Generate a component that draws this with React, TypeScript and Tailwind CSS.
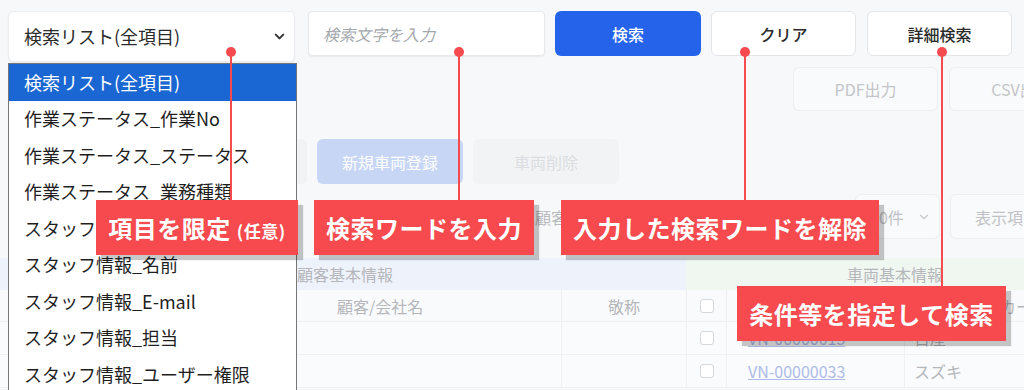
import { ChevronDown } from "lucide-react";

const font = "font-['Noto_Sans_CJK_JP','Noto_Sans',sans-serif]";

const options = [
  "検索リスト(全項目)",
  "作業ステータス_作業No",
  "作業ステータス_ステータス",
  "作業ステータス_業務種類",
  "スタッフ情報_スタッフNo",
  "スタッフ情報_名前",
  "スタッフ情報_E-mail",
  "スタッフ情報_担当",
  "スタッフ情報_ユーザー権限",
  "スタッフ情報_作成日",
];

// 注釈の線と丸
function Pin({ x, bottom }: { x: number; bottom: number }) {
  return (
    <div className="absolute top-[47px] flex flex-col items-center" style={{ left: x - 5 }}>
      <div className="w-[10px] h-[10px] rounded-full bg-[#f64a4e]" />
      <div className="w-[2px] bg-[#f64a4e] -mt-[2px]" style={{ height: bottom - 55 }} />
    </div>
  );
}

function Callout({ children, x, y, w }: { children: React.ReactNode; x: number; y: number; w: number }) {
  return (
    <div
      className="absolute h-[55px] flex items-center justify-center bg-[#f74a4e] text-white font-bold text-[24px] shadow-[5px_5px_1px_rgba(0,0,0,0.22)] tracking-[0.5px] whitespace-nowrap"
      style={{ left: x, top: y, width: w }}
    >
      {children}
    </div>
  );
}

export default function App() {
  return (
    <div className={`relative w-[1024px] h-[390px] overflow-hidden bg-[#f7f8fa] ${font}`}>
      {/* search bar */}
      <div className="flex items-start h-[56px] pt-[11px] pl-[8px]">
        <div className="shrink-0 w-[287px] h-[51px] bg-white rounded-[6px] border border-[#eceef1] shadow-[0_1px_2px_rgba(0,0,0,0.06)] flex items-center justify-between pl-[15px] pr-[7px] text-[18px] text-[#2b2b2b]">
          <span>検索リスト(全項目)</span>
          <ChevronDown size={15} strokeWidth={3.2} className="text-[#333]" />
        </div>
        <div className="ml-[13px] w-[237px] h-[45px] bg-white rounded-[4px] border border-[#e7e9ec] shadow-[0_1px_2px_rgba(0,0,0,0.06)] flex items-center pl-[14px] text-[16px] italic text-[#a5a8ad]">
          検索文字を入力
        </div>
        <button className="ml-[10px] w-[146px] h-[45px] rounded-[6px] bg-[#2563eb] text-white text-[16px] font-medium">
          検索
        </button>
        <button className="ml-[10px] w-[145px] h-[45px] rounded-[6px] bg-white border border-[#e3e5e8] text-[#2b2b2b] text-[16px] font-medium">
          クリア
        </button>
        <button className="ml-[11px] w-[145px] h-[45px] rounded-[6px] bg-white border border-[#e3e5e8] text-[#2b2b2b] text-[16px] font-medium">
          詳細検索
        </button>
      </div>

      {/* export buttons (faded) */}
      <div className="flex pl-[793px] mt-[11px] gap-[11px]">
        <div className="shrink-0 w-[145px] h-[44px] rounded-[6px] border border-[#eeeff1] bg-[#f9fafb] flex items-center justify-center text-[16px] text-[#c3c5c9]">
          PDF出力
        </div>
        <div className="shrink-0 w-[145px] h-[44px] rounded-[6px] border border-[#eeeff1] bg-[#f9fafb] flex items-center justify-center text-[16px] text-[#c3c5c9] whitespace-nowrap">
          CSV出力
        </div>
      </div>

      {/* action buttons */}
      <div className="flex pl-[162px] mt-[28px] gap-[10px]">
        <div className="w-[145px] h-[45px] rounded-[6px] bg-[#f1f2f4]" />
        <div className="w-[146px] h-[45px] rounded-[6px] bg-[#c8d6f6] flex items-center justify-center text-[16px] text-white">
          新規車両登録
        </div>
        <div className="w-[146px] h-[45px] rounded-[6px] bg-[#f2f3f5] flex items-center justify-center text-[16px] text-[#dcdde0]">
          車両削除
        </div>
      </div>

      {/* list controls */}
      <div className="flex items-center mt-[10px] h-[45px] pl-[535px]">
        <span className="shrink-0 w-[320px] text-[16px] text-[#b9bbbf] whitespace-nowrap">顧客数 100件</span>
        <div className="shrink-0 w-[85px] h-[45px] rounded-[6px] border border-[#eeeff1] bg-[#f9fafb] flex items-center justify-between pl-[14px] pr-[8px] text-[16px] text-[#c0c2c6]">
          <span>20件</span>
          <ChevronDown size={14} strokeWidth={2} className="text-[#c6c8cc]" />
        </div>
        <div className="ml-[10px] w-[120px] shrink-0 h-[45px] rounded-l-[6px] border border-[#eeeff1] bg-[#f9fafb] flex items-center pl-[24px] text-[16px] text-[#c0c2c6] whitespace-nowrap">
          表示項目
        </div>
      </div>

      {/* table */}
      <div className="mt-[19px] text-[16px] text-[#b5b7bb] whitespace-nowrap">
        <div className="flex h-[32px]">
          <div className="w-[686px] bg-[#eef2fb] flex items-center pl-[297px]">顧客基本情報</div>
          <div className="flex-1 bg-[#f0f7f1] flex items-center pl-[161px]">車両基本情報</div>
        </div>
        <div className="flex h-[32px] bg-[#f9fafb] border-b border-[#eff0f2]">
          <div className="shrink-0 w-[561px] flex items-center pl-[337px]">顧客/会社名</div>
          <div className="shrink-0 w-[125px] border-l border-[#eff0f2] flex items-center justify-center">敬称</div>
          <div className="shrink-0 w-[40px] border-l border-[#eff0f2] flex items-center justify-center">
            <div className="w-[14px] h-[14px] rounded-[3px] border border-[#d5d7db] bg-white" />
          </div>
          <div className="shrink-0 w-[178px] border-l border-[#eff0f2]" />
          <div className="shrink-0 w-[200px] border-l border-[#eff0f2] flex items-center pl-[95px]">カーメーカー</div>
        </div>
        {["VN-00000015", "VN-00000033"].map((id, i) => (
          <div key={id} className="flex h-[33px] bg-[#fafbfc] border-b border-[#eff0f2]">
            <div className="shrink-0 w-[561px]" />
            <div className="shrink-0 w-[125px] border-l border-[#eff0f2]" />
            <div className="shrink-0 w-[40px] border-l border-[#eff0f2] flex items-center justify-center">
              <div className="w-[14px] h-[14px] rounded-[3px] border border-[#d5d7db] bg-white" />
            </div>
            <div className="shrink-0 w-[178px] border-l border-[#eff0f2] flex items-center pl-[21px] text-[#aebde8] underline">
              {id}
            </div>
            <div className="shrink-0 w-[200px] border-l border-[#eff0f2] flex items-center pl-[9px]">
              {i === 0 ? "日産" : "スズキ"}
            </div>
          </div>
        ))}
      </div>

      {/* open dropdown */}
      <div className="absolute left-[8px] top-[63px] w-[289px] h-[340px] bg-white border border-[#767676] text-[18px] text-[#1f1f1f] whitespace-nowrap overflow-hidden">
        {options.map((o, i) => (
          <div
            key={o}
            className={`h-[36.5px] flex items-center pl-[15px] ${i === 0 ? "bg-[#1a66d2] text-white" : ""}`}
          >
            {o}
          </div>
        ))}
      </div>

      {/* annotations */}
      <Pin x={231} bottom={200} />
      <Pin x={459} bottom={200} />
      <Pin x={745} bottom={200} />
      <Pin x={942} bottom={286} />

      <Callout x={96} y={200} w={202}>
        <span>
          項目を限定 <span className="text-[17px]">(任意)</span>
        </span>
      </Callout>
      <Callout x={314} y={200} w={220}>検索ワードを入力</Callout>
      <Callout x={561} y={200} w={318}>入力した検索ワードを解除</Callout>
      <Callout x={737} y={286} w={269}>条件等を指定して検索</Callout>
    </div>
  );
}
